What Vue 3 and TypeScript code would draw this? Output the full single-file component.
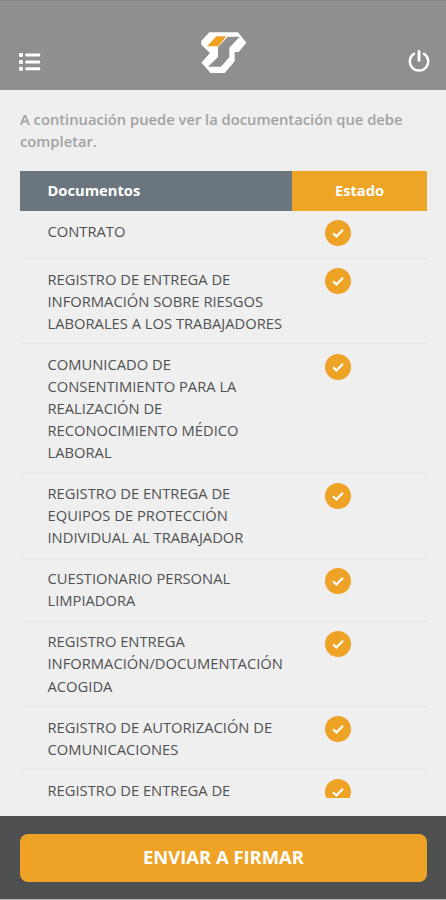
<script setup lang="ts">
interface DocumentRow {
  title: string
  done: boolean
}

const documents: DocumentRow[] = [
  { title: 'CONTRATO', done: true },
  { title: 'REGISTRO DE ENTREGA DE\nINFORMACIÓN SOBRE RIESGOS\nLABORALES A LOS TRABAJADORES', done: true },
  { title: 'COMUNICADO DE\nCONSENTIMIENTO PARA LA\nREALIZACIÓN DE\nRECONOCIMIENTO MÉDICO\nLABORAL', done: true },
  { title: 'REGISTRO DE ENTREGA DE\nEQUIPOS DE PROTECCIÓN\nINDIVIDUAL AL TRABAJADOR', done: true },
  { title: 'CUESTIONARIO PERSONAL\nLIMPIADORA', done: true },
  { title: 'REGISTRO ENTREGA\nINFORMACIÓN/DOCUMENTACIÓN\nACOGIDA', done: true },
  { title: 'REGISTRO DE AUTORIZACIÓN DE\nCOMUNICACIONES', done: true },
  { title: 'REGISTRO DE ENTREGA DE', done: true },
]
</script>

<template>
  <div class="screen">
    <header class="topbar">
      <button class="icon-button" aria-label="Menú">
        <svg class="menu-icon" width="22" height="18" viewBox="0 0 22 18" fill="#fff">
          <rect x="0" y="0" width="4" height="4" rx="1.2" />
          <rect x="0" y="7" width="4" height="4" rx="1.2" />
          <rect x="0" y="13.8" width="4" height="4" rx="1.2" />
          <rect x="6.3" y="0.6" width="14.9" height="3" rx="1" />
          <rect x="6.3" y="7.4" width="14.9" height="3" rx="1" />
          <rect x="6.3" y="14.2" width="14.9" height="3" rx="1" />
        </svg>
      </button>
      <svg class="logo" width="46" height="42" viewBox="0 0 138 126">
        <path d="M1 26 25 1H111L136 32 113 60H101V88L71 123H29L1 92 27 63 1 38Z" fill="#fff" />
        <path d="M46 13H76L53 43H18Z" fill="#eea327" />
        <path d="M80 14H116L85 47V76L60 104H21L51 75V46Z" fill="#8e8f91" />
      </svg>
      <button class="icon-button" aria-label="Salir">
        <svg class="power-icon" width="22" height="22" viewBox="0 0 22 22" fill="none" stroke="#fff" stroke-linecap="round">
          <path d="M6 3.7A9.2 9.2 0 1 0 16 3.7" stroke-width="2.5" />
          <path d="M11 1.5V10.6" stroke-width="2.8" />
        </svg>
      </button>
    </header>

    <main class="content">
      <p class="intro">A continuación puede ver la documentación que debe<br />completar.</p>
      <div class="table">
        <div class="table-head">
          <div class="head-name"><span>Documentos</span></div>
          <div class="head-state"><span>Estado</span></div>
        </div>
        <div v-for="(doc, i) in documents" :key="i" class="row">
          <div class="name">{{ doc.title }}</div>
          <svg v-if="doc.done" class="check" width="26" height="26" viewBox="0 0 26 26">
            <circle cx="13" cy="13" r="13" fill="#eea327" />
            <path d="M8.1 13.3 11.4 16.5 18 9.7" fill="none" stroke="#fff" stroke-width="2.2" />
          </svg>
        </div>
      </div>
    </main>

    <footer class="footer">
      <button class="submit"><span>ENVIAR A FIRMAR</span></button>
    </footer>
  </div>
</template>

<style>
body {
  margin: 0;
  background: #b5b5b6;
}
</style>

<style scoped>
.screen {
  box-sizing: border-box;
  width: 446px;
  height: 900px;
  padding-bottom: 1.5px;
  display: flex;
  flex-direction: column;
  overflow: hidden;
  font-family: "Open Sans", "Noto Sans", sans-serif;
}
.topbar {
  box-sizing: border-box;
  height: 90px;
  flex: none;
  display: flex;
  justify-content: space-between;
  align-items: flex-start;
  padding: 30.5px 16.5px 0 19px;
  background: #8e8f91;
  border-top: 1px solid #848587;
}
.icon-button {
  display: flex;
  padding: 0;
  border: 0;
  background: none;
}
.menu-icon {
  margin-top: 21px;
}
.power-icon {
  margin-top: 18.5px;
}
.logo {
  margin-right: 1px;
}
.content {
  box-sizing: border-box;
  height: 726px;
  flex: none;
  padding: 18px 19px 18.5px 20px;
  display: flex;
  flex-direction: column;
  background: #efefef;
}
.intro {
  margin: 0;
  height: 63px;
  flex: none;
  font-size: 14.74px;
  line-height: 22.2px;
  font-weight: 600;
  color: #a2a2a2;
  white-space: nowrap;
}
.table {
  flex: 1;
  min-height: 0;
  overflow: hidden;
}
.table-head {
  display: grid;
  grid-template-columns: 272px 1fr;
  height: 40px;
  color: #fff;
  font-size: 14.7px;
  line-height: 38.6px;
  font-weight: 700;
}
.head-name {
  padding-left: 27.5px;
  background: #6b757d;
}
.head-state {
  text-align: center;
  background: #eea424;
}
.row {
  box-sizing: border-box;
  display: grid;
  grid-template-columns: 277px 1fr;
  align-items: start;
  min-height: 48px;
  padding: 8.6px 0 9.3px 27.5px;
  border-bottom: 1px solid #e6e7e7;
}
.name {
  font-size: 14.74px;
  line-height: 22.1px;
  color: #505152;
  white-space: pre;
}
.check {
  display: block;
  margin-top: 0.8px;
}
.footer {
  flex: 1;
  box-sizing: border-box;
  padding: 18px 19px 0 20px;
  background: #4d4f50;
}
.submit {
  display: block;
  width: 100%;
  height: 47.5px;
  padding: 0 0 1.5px;
  border: 0;
  border-radius: 8px;
  background: #eea327;
  color: #fff;
  font-family: inherit;
  font-size: 18.4px;
  line-height: 46px;
  font-weight: 700;
}
</style>
